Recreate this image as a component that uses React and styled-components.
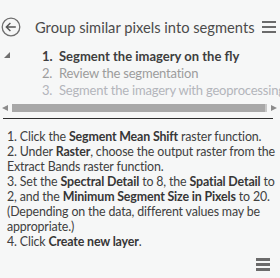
import styled, { createGlobalStyle } from "styled-components";

const GlobalStyle = createGlobalStyle`
  html, body {
    margin: 0;
    padding: 0;
    background: #f6f7f7;
  }
  body {
    font-family: Lato, "Liberation Sans", sans-serif;
  }
`;

const steps = [
  { id: 1, text: "Segment the imagery on the fly", state: "current" },
  { id: 2, text: "Review the segmentation", state: "next" },
  { id: 3, text: "Segment the imagery with geoprocessing", state: "later" },
];

export default function App() {
  return (
    <Panel>
      <GlobalStyle />
      <Header>
        <BackButton aria-label="Back">
          <svg width="20" height="20" viewBox="0 0 20 20">
            <circle cx="10" cy="10" r="8.8" fill="none" stroke="#6e6e6e" strokeWidth="1.3" />
            <path d="M5.3 10 H14.8 M9.4 5.9 L5.3 10 L9.4 14.1" fill="none" stroke="#555" strokeWidth="1.4" />
          </svg>
        </BackButton>
        <Title>Group similar pixels into segments</Title>
        <Menu>
          <Bar />
          <Bar />
          <Bar />
        </Menu>
      </Header>

      <StepArea>
        <Caret />
        <StepList>
          {steps.map((step) => (
            <Step key={step.id} $state={step.state}>
              <StepNum>{step.id}.</StepNum>
              {step.text}
            </Step>
          ))}
        </StepList>
      </StepArea>

      <ScrollBar>
        <Arrow $dir="left" />
        <Thumb />
        <Arrow $dir="right" />
      </ScrollBar>
      <Rule />

      <Instructions>
        <Line>
          1. Click the <b>Segment Mean Shift</b> raster function.
        </Line>
        <Line>
          2. Under <b>Raster</b>, choose the output raster from the
        </Line>
        <Line>Extract Bands raster function.</Line>
        <Line>
          3. Set the <b>Spectral Detail</b> to 8, the <b>Spatial Detail</b> to
        </Line>
        <Line>
          2, and the <b>Minimum Segment Size in Pixels</b> to 20.
        </Line>
        <Line>(Depending on the data, different values may be</Line>
        <Line>appropriate.)</Line>
        <Line>
          4. Click <b>Create new layer</b>.
        </Line>
      </Instructions>

      <Footer>
        <Menu>
          <Bar />
          <Bar />
          <Bar />
        </Menu>
      </Footer>
    </Panel>
  );
}

const Panel = styled.div`
  width: 280px;
  height: 278px;
  display: flex;
  flex-direction: column;
  background: #f6f7f7;
  color: #444;
  overflow: hidden;
`;

const Header = styled.div`
  display: flex;
  align-items: center;
  height: 20px;
  margin-top: 17px;
  padding: 0 4px 0 1px;
`;

const BackButton = styled.div`
  width: 20px;
  height: 20px;
  display: flex;
`;

const Title = styled.div`
  flex: 1;
  margin-left: 14px;
  font-size: 14.7px;
  color: #4b4b4b;
  white-space: nowrap;
`;

const Menu = styled.div`
  display: flex;
  flex-direction: column;
  gap: 2.5px;
  width: 14px;
`;

const Bar = styled.div`
  height: 2.5px;
  background: #6b6b6b;
`;

const StepArea = styled.div`
  display: flex;
  margin-top: 11px;
  height: 51px;
`;

const Caret = styled.div`
  width: 0;
  height: 0;
  margin: 4px 0 0 4px;
  border-left: 6px solid transparent;
  border-bottom: 6px solid #707070;
`;

const StepList = styled.ol`
  margin: 0 0 0 32px;
  padding: 0;
  list-style: none;
  font-size: 13px;
  line-height: 17px;
  white-space: nowrap;
`;

const Step = styled.li`
  font-weight: ${(p) => (p.$state === "current" ? 700 : 400)};
  letter-spacing: ${(p) => (p.$state === "current" ? "0" : "-0.2px")};
  color: ${(p) =>
    p.$state === "current" ? "#3e3e3e" : p.$state === "next" ? "#9c9c9c" : "#b3b5bb"};
`;

const StepNum = styled.span`
  display: inline-block;
  width: 17px;
`;

const ScrollBar = styled.div`
  display: flex;
  align-items: center;
  height: 8px;
  margin-top: 5px;
  padding: 0 3px 0 2px;
`;

const Arrow = styled.div`
  width: 0;
  height: 0;
  border-top: 3.5px solid transparent;
  border-bottom: 3.5px solid transparent;
  ${(p) =>
    p.$dir === "left"
      ? "border-right: 6px solid #8c8c8c; margin-right: 4px;"
      : "border-left: 6px solid #8c8c8c; margin-left: 4px;"}
`;

const Thumb = styled.div`
  flex: 1;
  height: 8px;
  background: #a8a8a8;
  border-right: 2px solid #c8c8c8;
`;

const Rule = styled.div`
  height: 1px;
  margin: 6px 7px 0 3px;
  background: #2e2e2e;
`;

const Instructions = styled.div`
  margin: 10px 0 0 7px;
  font-size: 12.4px;
  line-height: 15px;
  letter-spacing: -0.15px;
  color: #404040;

  b {
    font-weight: 700;
    color: #363636;
  }
`;

const Line = styled.div`
  white-space: nowrap;
`;

const Footer = styled.div`
  display: flex;
  justify-content: flex-end;
  padding: 9px 10px 0 0;
`;
